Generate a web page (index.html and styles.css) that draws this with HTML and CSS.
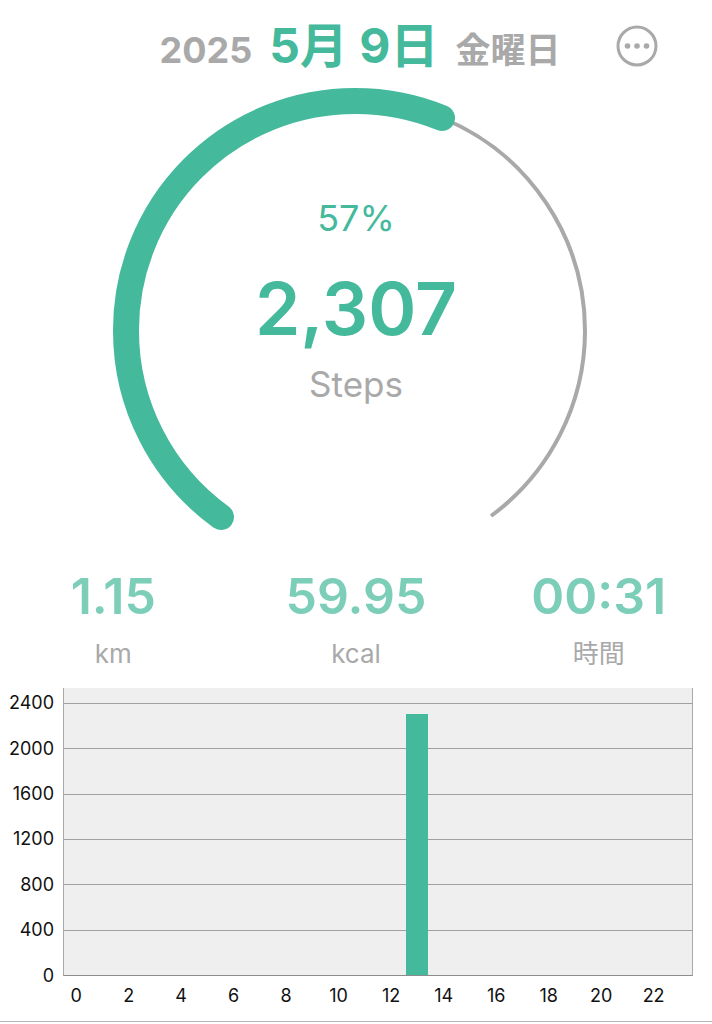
FILE: index.html
```html
<!DOCTYPE html>
<html lang="ja">

<head>
  <meta charset="UTF-8" />
  <meta name="viewport" content="width=device-width, initial-scale=1.0" />
  <title>Steps</title>
  <link rel="stylesheet" href="styles.css">
</head>

<body>
  <header>
    <h1 class="date">
      <span class="year">2025</span>
      <span class="day">5月 9日</span>
      <span class="weekday">金曜日</span>
    </h1>
    <button class="menu-btn" type="button" aria-label="メニュー">
      <svg viewBox="0 0 42 42" aria-hidden="true">
        <circle class="outline" cx="21" cy="21" r="19" />
        <circle cx="11.5" cy="21" r="2.8" />
        <circle cx="21" cy="21" r="2.8" />
        <circle cx="30.5" cy="21" r="2.8" />
      </svg>
    </button>
  </header>

  <main>
    <section class="ring">
      <svg viewBox="0 0 480 450" aria-hidden="true">
        <path class="track" d="M326 34 A230 230 0 0 1 469 247 A230 230 0 0 1 375 432" />
        <path class="progress" d="M105 433 A230 230 0 0 1 10 247 A229 229 0 0 1 239 17 A230 230 0 0 1 326 34" />
      </svg>
      <div class="ring-text">
        <p class="percent">57%</p>
        <p class="steps">2,307</p>
        <p class="label">Steps</p>
      </div>
    </section>

    <section class="stats">
      <div class="stat">
        <p class="value">1.15</p>
        <p class="unit">km</p>
      </div>
      <div class="stat">
        <p class="value">59.95</p>
        <p class="unit">kcal</p>
      </div>
      <div class="stat">
        <p class="value">00:31</p>
        <p class="unit">時間</p>
      </div>
    </section>

    <section class="chart">
      <div class="y-axis">
        <span>2400</span>
        <span>2000</span>
        <span>1600</span>
        <span>1200</span>
        <span>800</span>
        <span>400</span>
        <span>0</span>
      </div>
      <div class="plot">
        <div class="lines">
          <i></i><i></i><i></i><i></i><i></i><i></i>
        </div>
        <div class="bars">
          <div class="bar hour-13" style="height: 91%"></div>
        </div>
      </div>
      <div class="x-axis">
        <span>0</span>
        <span>2</span>
        <span>4</span>
        <span>6</span>
        <span>8</span>
        <span>10</span>
        <span>12</span>
        <span>14</span>
        <span>16</span>
        <span>18</span>
        <span>20</span>
        <span>22</span>
      </div>
    </section>
  </main>
</body>

</html>
```
FILE: styles.css
```css
* {
  margin: 0;
  padding: 0;
  box-sizing: border-box;
}

body {
  font-family: Inter, "Noto Sans CJK JP", sans-serif;
  color: #45b99c;
  background-color: #fff;
}

/* Header */
header {
  display: grid;
  grid-template-columns: 1fr auto 1fr;
  align-items: center;
  height: 84px;
  padding: 8px 54px 0 62px;
}

.date {
  grid-column: 2;
  display: flex;
  align-items: baseline;
  gap: 17px;
  padding-top: 4px;
  line-height: 64px;
  white-space: nowrap;
}

.year,
.weekday {
  color: #a9a9a9;
  font-size: 36px;
  font-weight: 700;
}

.weekday {
  font-size: 35px;
}

.day {
  font-size: 48px;
  font-weight: 700;
}

.menu-btn {
  justify-self: end;
  width: 42px;
  height: 42px;
  border: none;
  background: none;
  cursor: pointer;
}

.menu-btn svg {
  display: block;
  fill: #a9a9a9;
}

.menu-btn .outline {
  fill: none;
  stroke: #a9a9a9;
  stroke-width: 3;
}

/* Progress ring */
.ring {
  display: grid;
  justify-content: center;
}

.ring svg,
.ring-text {
  grid-area: 1 / 1;
}

.ring svg {
  width: 480px;
  max-width: 100%;
  overflow: visible;
}

.ring path {
  fill: none;
}

.track {
  stroke: #a9a9a9;
  stroke-width: 4;
}

.progress {
  stroke: #45b99c;
  stroke-width: 26;
  stroke-linecap: round;
}

.ring-text {
  padding-top: 112px;
  text-align: center;
}

.percent {
  font-size: 36px;
  font-weight: 400;
  line-height: 44px;
}

.steps {
  font-size: 73px;
  font-weight: 600;
  line-height: 90px;
  padding: 24px 0 8px;
}

.label {
  color: #a9a9a9;
  font-size: 35px;
  line-height: 44px;
}

/* Stats */
.stats {
  display: grid;
  grid-template-columns: repeat(3, 1fr);
  column-gap: 16px;
  padding-top: 32px;
  text-align: center;
}

.value {
  color: #7dceb9;
  font-size: 50px;
  font-weight: 600;
  line-height: 60px;
}

.unit {
  color: #a9a9a9;
  font-size: 26px;
  line-height: 32px;
  padding-top: 12px;
  height: 62px;
}

/* Hourly chart */
.chart {
  display: grid;
  grid-template-columns: 54px 1fr;
  grid-template-rows: 288px 45px;
  column-gap: 9px;
  padding-right: 19px;
  border-bottom: 1px solid #b5b5bd;
  color: #111;
  font-size: 18px;
}

/* labels are centered on the grid lines */
.y-axis {
  display: flex;
  flex-direction: column;
  margin: -8px 0 -22px;
  text-align: right;
}

.y-axis span {
  flex: 1;
  display: flex;
  align-items: center;
  justify-content: flex-end;
}

.plot {
  display: grid;
  background-color: #efefef;
  border: 1px solid #a9a9a9;
  border-top: none;
  border-bottom-color: #8c8c8c;
}

.lines,
.bars {
  grid-area: 1 / 1;
}

.lines {
  display: flex;
  flex-direction: column;
  padding-top: 15px;
}

.lines i {
  flex: 1;
  border-top: 1px solid #a0a0a0;
}

.bars {
  display: grid;
  grid-template-columns: repeat(24, 1fr);
  align-items: end;
}

.bar {
  margin: 0 2px;
  background-color: #45b99c;
}

.hour-13 {
  grid-column: 14;
}

.x-axis {
  grid-column: 2;
  display: grid;
  grid-template-columns: repeat(12, 1fr);
  padding-top: 9px;
  line-height: 22px;
}

/* each label sits under the first hour of its pair */
.x-axis span {
  width: 50%;
  display: flex;
  justify-content: center;
}
```
